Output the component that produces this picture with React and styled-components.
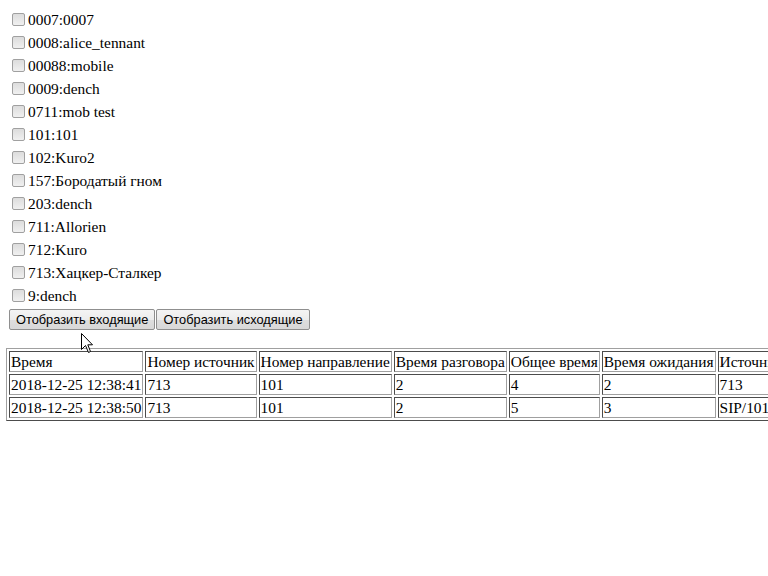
import * as React from "react";
import styled, { createGlobalStyle } from "styled-components";

const GlobalStyle = createGlobalStyle`
  html, body {
    margin: 0;
    padding: 0;
    background: #ffffff;
    overflow: hidden;
  }
  body {
    font-family: "Liberation Serif", "Times New Roman", serif;
    font-size: 15.4px;
    color: #000000;
  }
`;

const Page = styled.div`
  position: relative;
  padding: 8px;
  width: 1000px;
`;

const UserList = styled.div`
  display: flex;
  flex-direction: column;
`;

const UserRow = styled.label`
  display: flex;
  align-items: center;
  height: 23px;
  white-space: nowrap;
`;

const Check = styled.input`
  appearance: none;
  width: 13px;
  height: 13px;
  margin: 0 3px 0 4px;
  border: 1px solid #a0a0a0;
  border-radius: 2px;
  background: linear-gradient(#dcdcdc, #f0f0f0);
  box-sizing: border-box;
`;

const Toolbar = styled.div`
  display: flex;
  gap: 1px;
  margin: 2px 0 0 1px;
`;

const Button = styled.button`
  font-family: "Liberation Sans", Arial, sans-serif;
  font-size: 12.8px;
  color: #000000;
  height: 21px;
  padding: 0 6px;
  border: 1px solid #8f8f8f;
  border-radius: 2px;
  background: linear-gradient(#f4f4f4 0%, #ececec 50%, #dedede 51%, #d8d8d8 100%);
  white-space: nowrap;
`;

const Table = styled.table`
  margin: 18px 0 0 -2px;
  border: 1px outset #a0a0a0;
  border-spacing: 2px;
  border-collapse: separate;
  font-size: 15.4px;
`;

const Cell = styled.td`
  border: 1px inset #a0a0a0;
  padding: 1px;
  line-height: 17px;
  white-space: nowrap;
  text-align: left;
  font-weight: normal;
`;

const HeadCell = styled(Cell).attrs({ as: "th" })``;

const Pointer = styled.svg`
  position: absolute;
  left: 81px;
  top: 333px;
`;

const users = [
  "0007:0007",
  "0008:alice_tennant",
  "00088:mobile",
  "0009:dench",
  "0711:mob test",
  "101:101",
  "102:Kuro2",
  "157:Бородатый гном",
  "203:dench",
  "711:Allorien",
  "712:Kuro",
  "713:Хацкер-Сталкер",
  "9:dench",
];

const columns = [
  "Время",
  "Номер источник",
  "Номер направление",
  "Время разговора",
  "Общее время",
  "Время ожидания",
  "Источник",
];

const calls = [
  ["2018-12-25 12:38:41", "713", "101", "2", "4", "2", "713"],
  ["2018-12-25 12:38:50", "713", "101", "2", "5", "3", "SIP/101"],
];

const App = () => (
  <Page>
    <GlobalStyle />
    <UserList>
      {users.map((u) => (
        <UserRow key={u}>
          <Check type="checkbox" />
          {u}
        </UserRow>
      ))}
    </UserList>
    <Toolbar>
      <Button type="button">Отобразить входящие</Button>
      <Button type="button">Отобразить исходящие</Button>
    </Toolbar>
    <Table>
      <tbody>
        <tr>
          {columns.map((c) => (
            <HeadCell key={c}>{c}</HeadCell>
          ))}
        </tr>
        {calls.map((row) => (
          <tr key={row[0]}>
            {row.map((v, i) => (
              <Cell key={i}>{v}</Cell>
            ))}
          </tr>
        ))}
      </tbody>
    </Table>
    <Pointer width="13" height="21" viewBox="0 0 13 21">
      <path
        d="M0.5 0.5 L0.5 16.5 L4.5 12.5 L7.5 19.5 L9.5 18.5 L6.8 11.8 L11.5 11.8 Z"
        fill="#ffffff"
        stroke="#000000"
        strokeWidth="1"
      />
    </Pointer>
  </Page>
);

export default App;
